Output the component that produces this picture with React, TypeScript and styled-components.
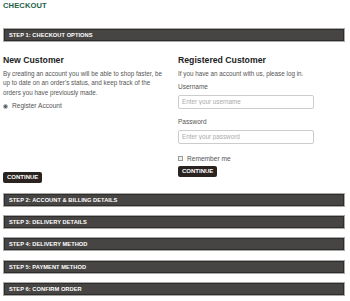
import React from 'react';
import styled, { createGlobalStyle } from 'styled-components';

const GlobalStyle = createGlobalStyle`
  html, body {
    margin: 0;
    padding: 0;
    background: #ffffff;
  }
  body {
    font-family: 'Liberation Sans', Arial, sans-serif;
    color: #4a4a4a;
  }
  * {
    box-sizing: border-box;
  }
`;

const Page = styled.div`
  width: 350px;
  padding: 1px 5px 0 3px;
`;

const Title = styled.h1`
  margin: 0;
  font-size: 7.6px;
  line-height: 10px;
  font-weight: 700;
  color: #1d6145;
  letter-spacing: 0.1px;
`;

const StepBar = styled.div`
  height: 14px;
  padding-left: 5px;
  display: flex;
  align-items: center;
  background: #474543;
  border: 1px solid #a8a8a6;
  box-shadow: inset 0 0 0 1px #2f2d2b;
  color: #ffffff;
  font-size: 5.7px;
  font-weight: 700;
  letter-spacing: 0.05px;
`;

const FirstStep = styled(StepBar)`
  margin-top: 17px;
`;

const Steps = styled.div`
  display: flex;
  flex-direction: column;
  gap: 8.25px;
  margin-top: 9.5px;
`;

const Columns = styled.div`
  display: grid;
  grid-template-columns: 175px 1fr;
  padding-top: 12.5px;
`;

const Column = styled.div`
  display: flex;
  flex-direction: column;
  align-items: flex-start;
`;

const Heading = styled.h2`
  margin: 0;
  font-size: 8.7px;
  line-height: 11px;
  font-weight: 700;
  color: #222222;
`;

const Text = styled.p`
  margin: 3px 0 0;
  font-size: 6.3px;
  line-height: 9.6px;
  color: #555555;
`;

const Choice = styled.label<{ $gap?: number }>`
  margin-top: ${(p) => p.$gap ?? 4}px;
  display: flex;
  align-items: center;
  gap: 4px;
  font-size: 6.6px;
  line-height: 10px;
  color: #555555;
`;

const Radio = styled.span`
  width: 5px;
  height: 5px;
  border-radius: 50%;
  border: 1px solid #9ca3a0;
  background: radial-gradient(circle, #4f5f66 0 1.2px, #c9d1d4 1.6px);
`;

const Checkbox = styled.span`
  width: 5px;
  height: 5px;
  border: 1px solid #9a9a9a;
  background: #f2f2f2;
`;

const Label = styled.div<{ $gap?: number }>`
  margin-top: ${(p) => p.$gap ?? 4.2}px;
  font-size: 6.5px;
  line-height: 10px;
  color: #555555;
`;

const Input = styled.input`
  margin-top: 2.7px;
  width: 136px;
  height: 14px;
  padding: 0 3px;
  border: 1px solid #cccccc;
  border-radius: 2px;
  font-family: 'Liberation Sans', Arial, sans-serif;
  font-size: 6.3px;
  color: #555555;
  outline: none;
  &::placeholder {
    color: #aaaaaa;
  }
`;

const Button = styled.button<{ $gap: number }>`
  margin-top: ${(p) => p.$gap}px;
  height: 11px;
  padding: 0 4px;
  border: none;
  border-radius: 2px;
  background: #2b2320;
  color: #ffffff;
  font-family: 'Liberation Sans', Arial, sans-serif;
  font-size: 6px;
  font-weight: 700;
  line-height: 11px;
  cursor: pointer;
`;

const steps = [
  'STEP 2: ACCOUNT & BILLING DETAILS',
  'STEP 3: DELIVERY DETAILS',
  'STEP 4: DELIVERY METHOD',
  'STEP 5: PAYMENT METHOD',
  'STEP 6: CONFIRM ORDER',
];

export default function App() {
  return (
    <Page>
      <GlobalStyle />
      <Title>CHECKOUT</Title>
      <FirstStep>STEP 1: CHECKOUT OPTIONS</FirstStep>
      <Columns>
        <Column>
          <Heading>New Customer</Heading>
          <Text>
            By creating an account you will be able to shop faster, be
            <br />
            up to date on an order's status, and keep track of the
            <br />
            orders you have previously made.
          </Text>
          <Choice>
            <Radio />
            Register Account
          </Choice>
          <Button $gap={61}>CONTINUE</Button>
        </Column>
        <Column>
          <Heading>Registered Customer</Heading>
          <Text>If you have an account with us, please log in.</Text>
          <Label>Username</Label>
          <Input placeholder="Enter your username" />
          <Label $gap={8.3}>Password</Label>
          <Input type="password" placeholder="Enter your password" />
          <Choice $gap={10}>
            <Checkbox />
            Remember me
          </Choice>
          <Button $gap={2}>CONTINUE</Button>
        </Column>
      </Columns>
      <Steps>
        {steps.map((s) => (
          <StepBar key={s}>{s}</StepBar>
        ))}
      </Steps>
    </Page>
  );
}
